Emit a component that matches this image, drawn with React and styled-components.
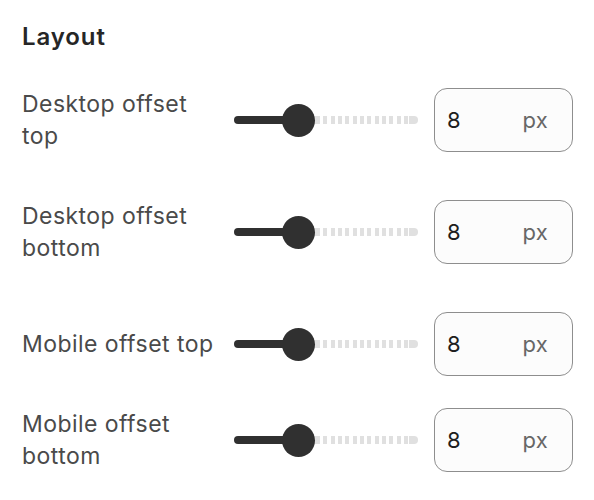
import React from "react";
import styled, { createGlobalStyle } from "styled-components";

const GlobalStyle = createGlobalStyle`
  html, body {
    margin: 0;
    padding: 0;
    background: #ffffff;
  }
  body {
    font-family: Inter, "Noto Sans", "Liberation Sans", sans-serif;
    -webkit-font-smoothing: antialiased;
  }
`;

const Panel = styled.section`
  width: 594px;
  box-sizing: border-box;
  padding: 22px 21px 0 22px;
`;

const Title = styled.h2`
  margin: 0;
  font-size: 24px;
  line-height: 30px;
  font-weight: 600;
  color: #262626;
  letter-spacing: 0.9px;
`;

const Rows = styled.div`
  display: flex;
  flex-direction: column;
  margin-top: 36px;
`;

const Row = styled.div`
  display: grid;
  grid-template-columns: 196px 184px 139px;
  column-gap: 16px;
  align-items: center;
  min-height: 64px;
  margin-top: ${(p) => p.$space}px;
`;

const Label = styled.label`
  font-size: 23px;
  line-height: 32px;
  letter-spacing: 0.45px;
  color: #4a4a4a;
  font-weight: 400;
`;

const SliderTrack = styled.div`
  position: relative;
  display: flex;
  align-items: center;
  height: 33px;
`;

const Filled = styled.div`
  height: 8px;
  background: #303030;
  border-radius: 4px 0 0 4px;
  flex: none;
`;

const Rest = styled.div`
  flex: 1;
  height: 8px;
  border-radius: 0 4px 4px 0;
  background:
    linear-gradient(to left, #e0e0e0 0 9px, transparent 9px),
    repeating-linear-gradient(
      90deg,
      #e0e0e0 0 4px,
      transparent 4px 7.33px
    );
  background-position: 0 0, 17px 0;
  background-repeat: no-repeat, repeat;
`;

const Thumb = styled.div`
  position: absolute;
  top: 0;
  width: 33px;
  height: 33px;
  margin-left: -16.5px;
  border-radius: 50%;
  background: #303030;
`;

const NumberBox = styled.div`
  display: flex;
  align-items: center;
  justify-content: space-between;
  box-sizing: border-box;
  height: 64px;
  padding: 0 24px 0 12px;
  border: 1px solid #8e8e8e;
  border-radius: 13px;
  background: #fcfcfc;
`;

const NumberInput = styled.input`
  width: 40px;
  border: none;
  outline: none;
  padding: 0;
  background: transparent;
  font-family: inherit;
  font-size: 22px;
  letter-spacing: 0.3px;
  color: #1e1e1e;
`;

const Unit = styled.span`
  font-size: 22px;
  letter-spacing: 0.3px;
  color: #676767;
`;

const THUMB = 33;
const WIDTH = 184;

function Slider({ value, max }) {
  const pos = THUMB / 2 + ((WIDTH - THUMB) * value) / max;
  return (
    <SliderTrack>
      <Filled style={{ width: pos }} />
      <Rest />
      <Thumb style={{ left: pos }} />
    </SliderTrack>
  );
}

const rows = [
  { label: "Desktop offset top", space: 0 },
  { label: "Desktop offset bottom", space: 48 },
  { label: "Mobile offset top", space: 48 },
  { label: "Mobile offset bottom", space: 32 },
];

export default function App() {
  return (
    <>
      <GlobalStyle />
      <Panel>
        <Title>Layout</Title>
        <Rows>
          {rows.map((r) => (
            <Row key={r.label} $space={r.space}>
              <Label>{r.label}</Label>
              <Slider value={8} max={25} />
              <NumberBox>
                <NumberInput type="text" defaultValue="8" aria-label={r.label} />
                <Unit>px</Unit>
              </NumberBox>
            </Row>
          ))}
        </Rows>
      </Panel>
    </>
  );
}
